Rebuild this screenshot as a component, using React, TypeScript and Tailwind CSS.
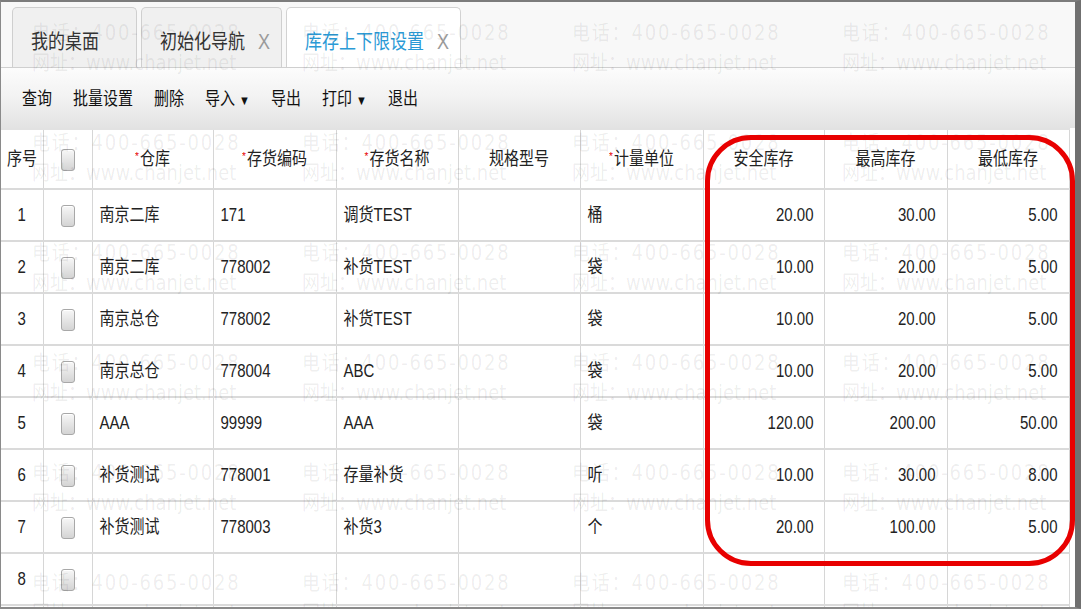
import React from 'react'

type Row = [string, string, string, string, string, string, string, string, string]

const rows: Row[] = [
  ['1', '南京二库', '171', '调货TEST', '', '桶', '20.00', '30.00', '5.00'],
  ['2', '南京二库', '778002', '补货TEST', '', '袋', '10.00', '20.00', '5.00'],
  ['3', '南京总仓', '778002', '补货TEST', '', '袋', '10.00', '20.00', '5.00'],
  ['4', '南京总仓', '778004', 'ABC', '', '袋', '10.00', '20.00', '5.00'],
  ['5', 'AAA', '99999', 'AAA', '', '袋', '120.00', '200.00', '50.00'],
  ['6', '补货测试', '778001', '存量补货', '', '听', '10.00', '30.00', '8.00'],
  ['7', '补货测试', '778003', '补货3', '', '个', '20.00', '100.00', '5.00'],
  ['8', '', '', '', '', '', '', '', ''],
  ['', '', '', '', '', '', '', '', ''],
]

const widths = [42, 49, 121, 123, 122, 122, 123, 121, 123, 122]

function T({ children, className = '' }: { children: React.ReactNode; className?: string }) {
  return <span className={`inline-block scale-y-[1.18] ${className}`}>{children}</span>
}

function Check() {
  return (
    <span className="inline-block h-[22px] w-[14px] rounded-[3px] border border-[#a8a8a8] bg-gradient-to-b from-[#f7f7f7] to-[#d4d4d4] align-middle shadow-[inset_0_1px_0_#fff]" />
  )
}

function Head({ label, req }: { label: string; req?: boolean }) {
  return (
    <T>
      {req ? <span className="relative -top-[4px] mr-[1px] text-[10px] text-[#e60000]">*</span> : null}
      {label}
    </T>
  )
}

function Tab({ label, close, active, width }: { label: string; close?: boolean; active?: boolean; width: string }) {
  return (
    <div
      className={`flex h-[60px] items-center gap-[13px] rounded-t-[5px] border border-b-0 pl-[18px] pt-[10px] text-[17px] ${width} ${
        active ? 'border-[#d2d2d2] bg-white text-[#2b9ad6]' : 'border-[#cfcfcf] bg-[#f0f0f0] text-[#333]'
      }`}
    >
      <T>{label}</T>
      {close ? <T className="text-[18px] font-light text-[#9a9a9a]">X</T> : null}
    </div>
  )
}

function Watermark() {
  const xs = [31, 301, 571, 841]
  const ys = [16, 126, 236, 346, 456, 566]
  return (
    <div className="pointer-events-none absolute inset-0 font-['DejaVu_Sans','Noto_Sans_CJK_SC',sans-serif] text-[18px] text-black/[0.075]">
      {ys.map((y) =>
        xs.map((x) => (
          <div key={`${x}-${y}`} className="absolute leading-[30px]" style={{ left: x, top: y }}>
            <div className="scale-y-[1.15] whitespace-nowrap tracking-[1.8px]">电话：400-665-0028</div>
            <div className="scale-y-[1.15] whitespace-nowrap">网址：www.chanjet.net</div>
          </div>
        ))
      )}
    </div>
  )
}

export default function App() {
  return (
    <div className="relative h-[609px] w-[1081px] overflow-hidden border-b-2 border-l border-r-[6px] border-t-2 border-b-[#8a8a8a] border-l-[#8a8a8a] border-r-[#707070] border-t-[#7c7c7c] bg-white font-['Liberation_Sans','Noto_Sans_CJK_SC',sans-serif] text-[#222]">
      <div className="flex h-[65px] items-end gap-[4px] bg-[#f8f8f8] pl-[11px]">
        <Tab label="我的桌面" width="w-[125px]" />
        <Tab label="初始化导航" close width="w-[141px]" />
        <Tab label="库存上下限设置" close active width="w-[175px]" />
      </div>

      <div className="flex h-[61px] items-center gap-[21px] border-t border-[#cfcfcf] bg-gradient-to-b from-[#fcfcfc] via-[#f2f2f2] to-[#e3e3e3] pl-[21px] pt-[3px] text-[15px] text-[#111]">
        <T>查询</T>
        <T>批量设置</T>
        <T>删除</T>
        <T>
          导入<span className="ml-[4px] text-[11px]">▼</span>
        </T>
        <T>导出</T>
        <T>
          打印<span className="ml-[4px] text-[11px]">▼</span>
        </T>
        <T>退出</T>
      </div>

      <table className="table-fixed border-collapse border-t-2 border-[#e2e2e2] text-[15px]" style={{ width: 1068 }}>
        <colgroup>
          {widths.map((w, i) => (
            <col key={i} style={{ width: w }} />
          ))}
        </colgroup>
        <thead>
          <tr className="h-[60px] border-b-2 border-[#dadada]">
            <th className="border-r border-[#d6d6d6] pl-[6px] text-left font-normal"><Head label="序号" /></th>
            <th className="border-r border-[#d6d6d6] font-normal"><Check /></th>
            <th className="border-r border-[#d6d6d6] font-normal"><Head label="仓库" req /></th>
            <th className="border-r border-[#d6d6d6] font-normal"><Head label="存货编码" req /></th>
            <th className="border-r border-[#d6d6d6] font-normal"><Head label="存货名称" req /></th>
            <th className="border-r border-[#d6d6d6] font-normal"><Head label="规格型号" /></th>
            <th className="border-r border-[#d6d6d6] font-normal"><Head label="计量单位" req /></th>
            <th className="border-r border-[#d6d6d6] font-normal"><Head label="安全库存" /></th>
            <th className="border-r border-[#d6d6d6] font-normal"><Head label="最高库存" /></th>
            <th className="border-r border-[#d6d6d6] font-normal"><Head label="最低库存" /></th>
          </tr>
        </thead>
        <tbody>
          {rows.map((r, i) => (
            <tr key={i} className="h-[52px] border-b-2 border-[#dadada]">
              <td className="border-r border-[#d6d6d6] text-center"><T>{r[0]}</T></td>
              <td className="border-r border-[#d6d6d6] text-center"><Check /></td>
              <td className="border-r border-[#d6d6d6] pl-[7px]"><T>{r[1]}</T></td>
              <td className="border-r border-[#d6d6d6] pl-[7px]"><T>{r[2]}</T></td>
              <td className="border-r border-[#d6d6d6] pl-[7px]"><T>{r[3]}</T></td>
              <td className="border-r border-[#d6d6d6] pl-[7px]"><T>{r[4]}</T></td>
              <td className="border-r border-[#d6d6d6] pl-[7px]"><T>{r[5]}</T></td>
              <td className="border-r border-[#d6d6d6] pr-[10px] text-right"><T>{r[6]}</T></td>
              <td className="border-r border-[#d6d6d6] pr-[11px] text-right"><T>{r[7]}</T></td>
              <td className="border-r border-[#d6d6d6] pr-[11px] text-right"><T>{r[8]}</T></td>
            </tr>
          ))}
        </tbody>
      </table>

      <Watermark />

      <div className="pointer-events-none absolute left-[704px] top-[133px] h-[431px] w-[370px] rounded-[46px] border-[5px] border-[#e80000]" />
    </div>
  )
}
